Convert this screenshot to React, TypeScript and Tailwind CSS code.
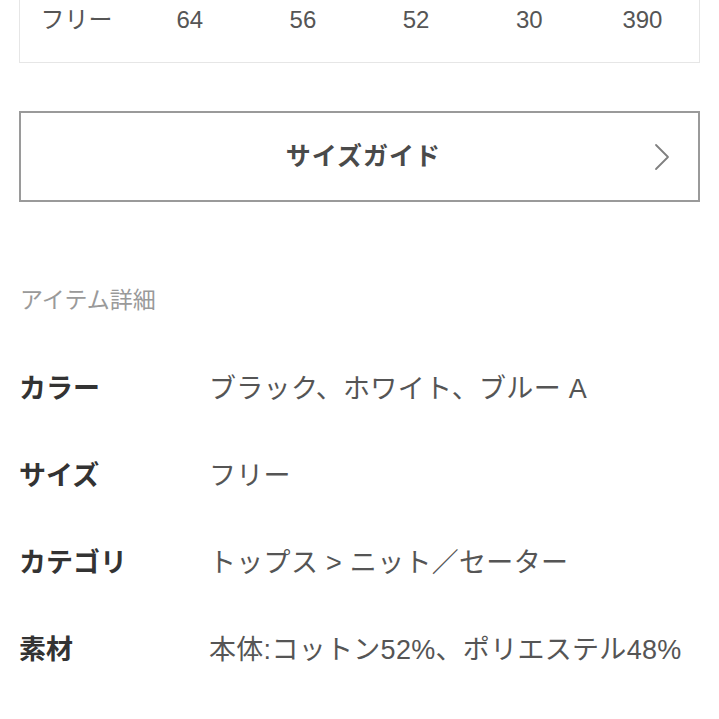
const sizes = ["フリー", "64", "56", "52", "30", "390"];

const details = [
  { label: "カラー", value: "ブラック、ホワイト、ブルー A" },
  { label: "サイズ", value: "フリー" },
  { label: "カテゴリ", value: "トップス > ニット／セーター" },
  { label: "素材", value: "本体:コットン52%、ポリエステル48%" },
  { label: "原産国", value: "中国" },
];

function Chevron() {
  return (
    <svg width="16" height="28" viewBox="0 0 16 28" fill="none" className="text-[#808080]">
      <polyline points="2,2 14,14 2,26" stroke="currentColor" strokeWidth="1.8" strokeLinecap="round" strokeLinejoin="round" />
    </svg>
  );
}

export default function App() {
  return (
    <div className="h-[719px] overflow-hidden bg-white px-[19px] font-['Liberation_Sans','Noto_Sans_CJK_JP',sans-serif]">
      {/* size table, scrolled so only the last row shows */}
      <div className="-mt-[20px] border border-[#e6e6e6]">
        <div className="grid grid-cols-6 pb-[26px] pt-[23px] text-[24px] leading-[32px] text-[#555]">
          {sizes.map((s) => (
            <div key={s} className="text-center">{s}</div>
          ))}
        </div>
      </div>

      <button className="mt-[48px] grid h-[91px] w-full grid-cols-[1fr_auto_1fr] items-center border-2 border-[#9a9a9a] bg-white">
        <span />
        <span className="pl-[8px] text-[25px] font-bold tracking-[1px] text-[#4a4a4a]">サイズガイド</span>
        <span className="flex justify-end pr-[28px]">
          <Chevron />
        </span>
      </button>

      <h3 className="mt-[84px] pl-px text-[23px] leading-[28px] text-[#9a9a9a]">アイテム詳細</h3>

      <dl className="mt-[32px] flex flex-col">
        {details.map((d) => (
          <div key={d.label} className="flex h-[87px] items-center">
            <dt className="w-[190px] shrink-0 text-[27px] font-bold text-[#333]">{d.label}</dt>
            <dd className="text-[27px] tracking-[0.3px] text-[#555]">{d.value}</dd>
          </div>
        ))}
      </dl>
    </div>
  );
}
